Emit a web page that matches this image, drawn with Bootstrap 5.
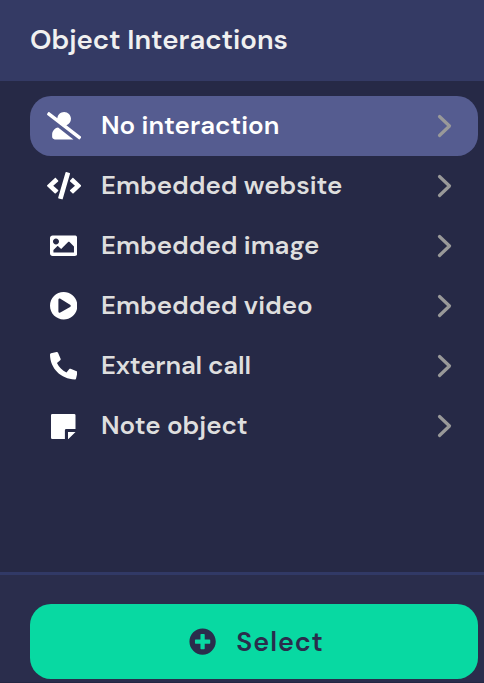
<!DOCTYPE html>
<html lang="en">
<head>
<meta charset="utf-8">
<meta name="viewport" content="width=device-width, initial-scale=1">
<title>Object Interactions</title>
<link href="https://cdn.jsdelivr.net/npm/bootstrap@5.3.0/dist/css/bootstrap.min.css" rel="stylesheet">
<style>
body{background:#262946;font-family:"DM Sans",Inter,sans-serif;font-optical-sizing:none;font-variation-settings:"opsz" 9;height:683px;overflow:hidden}
.panel-head{background:#343a64;height:81px;padding:0 30px 2px}
.panel-title{font-size:27.5px;font-weight:560;color:#f0f0f0;line-height:32px;white-space:nowrap}
.options{padding:15px 6px 0 30px}
.option{height:60px;border:0;border-radius:21px;background:transparent;color:#dedede;font-size:25.9px;font-weight:560;line-height:30px;padding:0 26px 0 16px}
.option.selected{background:#555c90;color:#fff}
.option-icon{width:35.4px;height:36px;color:#fff}
.option-icon svg{height:27.4px;fill:currentColor}
.option-icon .note-icon{width:24.5px;height:25px}
.option-label{margin-left:19.6px;padding-bottom:2px;white-space:nowrap}
.label-call{letter-spacing:-.18px}
.chevron{width:15px;height:24px;fill:none;stroke:#999;stroke-width:3.2;stroke-linecap:round;stroke-linejoin:round}
.panel-foot{height:111px;border-top:3px solid #313966;border-bottom:1px solid #242743;background:#2a2d4c;padding:29px 6px 0 30px}
.btn-select{height:75px;border:0;border-radius:21px;background:#08d9a2!important;color:#2a2d4c!important;font-size:26.8px;font-weight:560;letter-spacing:1px;line-height:32px;padding:0 0 0 5px}
.btn-select svg{width:27.2px;height:27.2px;fill:currentColor;margin-right:20px}
</style>
<script src="https://cdn.jsdelivr.net/npm/bootstrap@5.3.0/dist/js/bootstrap.bundle.min.js"></script>
</head>
<body class="d-flex flex-column">
<header class="panel-head d-flex align-items-center flex-shrink-0">
  <h1 class="panel-title mb-0">Object Interactions</h1>
</header>
<main class="options d-flex flex-column flex-grow-1">
  <button class="option selected d-flex align-items-center w-100">
    <span class="option-icon d-flex align-items-center justify-content-center"><svg viewBox="0 0 640 512"><path d="M633.8 458.1L362.3 248.3C412.1 230.7 448 183.8 448 128 448 57.3 390.7 0 320 0c-67.1 0-121.1 51.8-126.4 117.6L45.5 3.4C38.5-2 28.5-.8 23 6.2L3.4 31.4c-5.4 7-4.2 17 2.8 22.4L594.5 508.6c7 5.4 17 4.1 22.5-2.8l19.6-25.3c5.4-6.8 4.1-16.9-2.8-22.4zM96 422.4V464c0 26.5 21.5 48 48 48h350.2L207.4 290.3C144.2 301.3 96 356 96 422.4z"/></svg></span>
    <span class="option-label">No interaction</span>
    <svg class="chevron ms-auto" viewBox="0 0 15 24"><path d="M2.5 2.5L12.5 12 2.5 21.5"/></svg>
  </button>
  <button class="option d-flex align-items-center w-100">
    <span class="option-icon d-flex align-items-center justify-content-center"><svg viewBox="0 0 640 512"><path d="M278.9 511.5l-61-17.7c-6.4-1.8-10-8.5-8.2-14.9L346.2 8.7c1.8-6.4 8.5-10 14.9-8.2l61 17.7c6.4 1.8 10 8.5 8.2 14.9L293.8 503.3c-1.9 6.4-8.5 10.1-14.9 8.2zm-114-112.2l43.5-46.4c4.6-4.9 4.3-12.7-.8-17.2L117 256l90.6-79.7c5.1-4.5 5.5-12.3.8-17.2l-43.5-46.4c-4.5-4.8-12.1-5.1-17-.5L3.8 247.2c-5.1 4.7-5.1 12.8 0 17.5l144.1 135.1c4.9 4.6 12.5 4.4 17-.5zm327.2.6l144.1-135.1c5.1-4.7 5.1-12.8 0-17.5L492.1 112.1c-4.8-4.5-12.4-4.3-17 .5L431.6 159c-4.6 4.9-4.3 12.7.8 17.2L523 256l-90.6 79.7c-5.1 4.5-5.5 12.3-.8 17.2l43.5 46.4c4.5 4.9 12.1 5.1 17 .6z"/></svg></span>
    <span class="option-label">Embedded website</span>
    <svg class="chevron ms-auto" viewBox="0 0 15 24"><path d="M2.5 2.5L12.5 12 2.5 21.5"/></svg>
  </button>
  <button class="option d-flex align-items-center w-100">
    <span class="option-icon d-flex align-items-center justify-content-center"><svg viewBox="0 0 512 512"><path d="M464 448H48c-26.51 0-48-21.49-48-48V112c0-26.51 21.49-48 48-48h416c26.51 0 48 21.49 48 48v288c0 26.51-21.49 48-48 48zM112 120c-30.928 0-56 25.072-56 56s25.072 56 56 56 56-25.072 56-56-25.072-56-56-56zM64 384h384V272l-87.515-87.515c-4.686-4.686-12.284-4.686-16.971 0L208 320l-55.515-55.515c-4.686-4.686-12.284-4.686-16.971 0L64 336v48z"/></svg></span>
    <span class="option-label">Embedded image</span>
    <svg class="chevron ms-auto" viewBox="0 0 15 24"><path d="M2.5 2.5L12.5 12 2.5 21.5"/></svg>
  </button>
  <button class="option d-flex align-items-center w-100">
    <span class="option-icon d-flex align-items-center justify-content-center"><svg viewBox="8 8 496 496"><path fill-rule="evenodd" d="M371.7 238l-176-107c-15.8-8.8-35.7 2.5-35.7 21v208c0 18.4 19.8 29.8 35.7 21l176-101c16.4-9.1 16.4-32.8 0-42zM504 256C504 119 393 8 256 8S8 119 8 256s111 248 248 248 248-111 248-248z"/></svg></span>
    <span class="option-label">Embedded video</span>
    <svg class="chevron ms-auto" viewBox="0 0 15 24"><path d="M2.5 2.5L12.5 12 2.5 21.5"/></svg>
  </button>
  <button class="option d-flex align-items-center w-100">
    <span class="option-icon d-flex align-items-center justify-content-center"><svg viewBox="0 0 512 512"><path transform="translate(512 0) scale(-1 1)" d="M493.4 24.6l-104-24c-11.3-2.6-22.9 3.3-27.5 13.9l-48 112c-4.2 9.8-1.4 21.3 6.9 28l60.6 49.6c-36 76.7-98.9 140.5-177.2 177.2l-49.6-60.6c-6.8-8.3-18.2-11.1-28-6.9l-112 48C3.9 366.5-2 378.1.6 389.4l24 104C27.1 504.2 36.7 512 48 512c256.1 0 464-207.5 464-464 0-11.2-7.7-20.9-18.6-23.4z"/></svg></span>
    <span class="option-label label-call">External call</span>
    <svg class="chevron ms-auto" viewBox="0 0 15 24"><path d="M2.5 2.5L12.5 12 2.5 21.5"/></svg>
  </button>
  <button class="option d-flex align-items-center w-100">
    <span class="option-icon d-flex align-items-center justify-content-center"><svg class="note-icon" viewBox="0 0 24.5 25"><path d="M1.3 0H23.2a1.3 1.3 0 0 1 1.3 1.3V15H15.2a1.3 1.3 0 0 0-1.3 1.3V25H1.3A1.3 1.3 0 0 1 0 23.7V1.3A1.3 1.3 0 0 1 1.3 0zM17 18h7.5L17.4 25H17z"/></svg></span>
    <span class="option-label">Note object</span>
    <svg class="chevron ms-auto" viewBox="0 0 15 24"><path d="M2.5 2.5L12.5 12 2.5 21.5"/></svg>
  </button>
</main>
<footer class="panel-foot flex-shrink-0">
  <button class="btn btn-select w-100 d-flex align-items-center justify-content-center"><svg viewBox="0 0 512 512"><path d="M256 8C119 8 8 119 8 256s111 248 248 248 248-111 248-248S393 8 256 8zm144 276c0 6.6-5.4 12-12 12h-92v92c0 6.6-5.4 12-12 12h-56c-6.6 0-12-5.4-12-12v-92h-92c-6.6 0-12-5.4-12-12v-56c0-6.6 5.4-12 12-12h92v-92c0-6.6 5.4-12 12-12h56c6.6 0 12 5.4 12 12v92h92c6.6 0 12 5.4 12 12v56z"/></svg><span>Select</span></button>
</footer>
</body>
</html>
